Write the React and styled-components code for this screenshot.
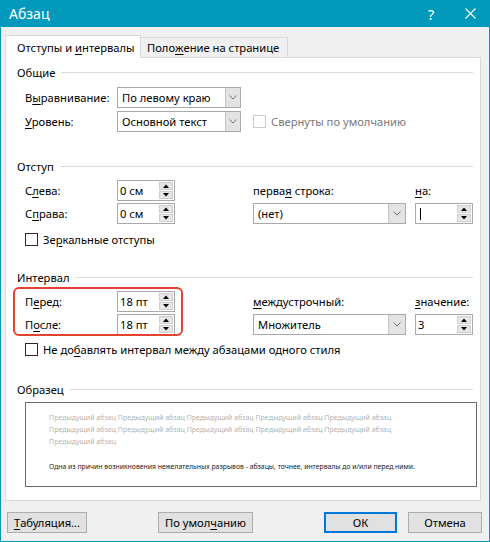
import React from "react";
import styled, { createGlobalStyle } from "styled-components";

const GlobalStyle = createGlobalStyle`
  html, body {
    margin: 0;
    padding: 0;
    background: #ffffff;
  }
  body {
    font-family: "Noto Sans", "Open Sans", sans-serif;
    font-size: 11.2px;
    color: #000;
  }
  * {
    box-sizing: border-box;
  }
`;

const Window = styled.div`
  width: 490px;
  height: 542px;
  border: 1px solid #0a98bb;
  border-top: none;
  background: #f0f0f0;
  display: flex;
  flex-direction: column;
`;

const TitleBar = styled.div`
  height: 27px;
  margin: 0 -1px;
  background: #0399bd;
  color: #fff;
  display: flex;
  align-items: center;
  padding-left: 9px;
  font-size: 14px;
`;

const TitleText = styled.div`
  flex: 1;
`;

const TitleButton = styled.div`
  width: ${(p) => p.w || 40}px;
  height: 27px;
  display: flex;
  align-items: center;
  justify-content: center;
  font-size: 15px;
`;

const TabBar = styled.div`
  display: flex;
  align-items: flex-end;
  margin-top: 8px;
  padding-left: 4px;
  position: relative;
  z-index: 1;
`;

const Tab = styled.div`
  height: ${(p) => (p.active ? 23 : 20)}px;
  width: ${(p) => p.w}px;
  background: ${(p) => (p.active ? "#fff" : "#f0f0f0")};
  border: 1px solid #d9d9d9;
  border-bottom: none;
  border-left: ${(p) => (p.active ? "1px solid #d9d9d9" : "none")};
  margin-bottom: ${(p) => (p.active ? -1 : 0)}px;
  padding-left: ${(p) => (p.active ? 11 : 6)}px;
  display: flex;
  align-items: center;
  white-space: pre;
  overflow: hidden;
`;

const Panel = styled.div`
  margin: 0 8px 0 4px;
  height: 444px;
  background: #fff;
  border: 1px solid #d9d9d9;
  padding: 0 7px 0 11px;
  display: flex;
  flex-direction: column;
`;

const SectionHeader = styled.div`
  height: 16px;
  margin-top: ${(p) => p.mt}px;
  display: flex;
  align-items: center;
  &::after {
    content: "";
    flex: 1;
    height: 1px;
    background: #dcdcdc;
    margin-left: 6px;
  }
`;

const FormGrid = styled.div`
  position: relative;
  margin-top: 5px;
  margin-left: 8px;
  display: grid;
  grid-template-columns: 92px 136px 162px 58px;
  grid-auto-rows: ${(p) => p.rowH || 23}px;
  align-items: center;
`;

const Label = styled.div`
  color: ${(p) => (p.disabled ? "#7a7a7a" : "#000")};
  white-space: pre;
`;

const U = styled.span`
  text-decoration: underline;
  text-underline-offset: 2px;
`;

const ComboBox = styled.div`
  width: ${(p) => p.w}px;
  height: 21px;
  border: 1px solid #a9a9a9;
  background: #fff;
  display: flex;
  align-items: stretch;
`;

const ComboText = styled.div`
  flex: 1;
  padding-left: 4px;
  display: flex;
  align-items: center;
  white-space: nowrap;
`;

const ComboArrow = styled.div`
  width: ${(p) => p.w || 15}px;
  background: #e3e3e3;
  border-left: 1px solid #c4c4c4;
  display: flex;
  align-items: center;
  justify-content: center;
`;

const SpinBox = styled.div`
  width: 58px;
  height: 21px;
  border: 1px solid #a9a9a9;
  background: #fff;
  display: flex;
`;

const SpinText = styled.div`
  flex: 1;
  padding-left: 2px;
  display: flex;
  align-items: center;
  white-space: nowrap;
`;

const Caret = styled.div`
  width: 1px;
  height: 12px;
  background: #000;
  margin-left: 2px;
`;

const SpinButtons = styled.div`
  width: 16px;
  display: flex;
  flex-direction: column;
  padding: 1px;
  gap: 1px;
`;

const SpinButton = styled.div`
  flex: 1;
  background: #e6e6e6;
  border: 1px solid #cfcfcf;
  display: flex;
  align-items: center;
  justify-content: center;
`;

const CheckRow = styled.div`
  margin-top: ${(p) => p.mt}px;
  margin-left: 8px;
  height: 14px;
  display: flex;
  align-items: center;
  gap: 5px;
`;

const CheckBox = styled.div`
  width: 13px;
  height: 13px;
  border: 1px solid ${(p) => (p.disabled ? "#cccccc" : "#3a2030")};
  background: #fff;
  flex-shrink: 0;
`;

const InlineCheck = styled.div`
  display: flex;
  align-items: center;
  gap: 5px;
  white-space: nowrap;
`;

const Highlight = styled.div`
  position: absolute;
  left: -12px;
  top: -3px;
  width: 170px;
  height: 49px;
  border: 2px solid #e5412f;
  border-radius: 6px;
  pointer-events: none;
`;

const Preview = styled.div`
  margin: 5px -4px 0 8px;
  height: 85px;
  border: 1px solid #6b6b6b;
  background: #fff;
  padding: 9px 0 0 23px;
  font-size: 7px;
`;

const PrevLine = styled.div`
  height: 12px;
  line-height: 12px;
  color: #b3b3b3;
  white-space: nowrap;
`;

const SampleLine = styled.div`
  margin-top: 13px;
  height: 12px;
  line-height: 12px;
  font-size: 6.85px;
  color: #1a1a1a;
  white-space: nowrap;
`;

const ButtonRow = styled.div`
  margin-top: 11px;
  padding: 0 7px 0 6px;
  display: flex;
  align-items: center;
`;

const Button = styled.div`
  width: ${(p) => p.w}px;
  height: 21px;
  margin-left: ${(p) => (p.ml === "auto" ? "auto" : `${p.ml || 0}px`)};
  background: #e1e1e1;
  border: ${(p) => (p.primary ? "2px solid #0078d7" : "1px solid #adadad")};
  display: flex;
  align-items: center;
  justify-content: center;
  white-space: pre;
`;

const Chevron = () => (
  <svg width="8" height="5" viewBox="0 0 8 5">
    <path d="M0.5 0.5 L4 4 L7.5 0.5" fill="none" stroke="#707070" strokeWidth="1" />
  </svg>
);

const Tri = ({ up }) => (
  <svg width="6" height="4" viewBox="0 0 6 4">
    <path d={up ? "M0 4 L3 0.5 L6 4 Z" : "M0 0 L3 3.5 L6 0 Z"} fill="#000" />
  </svg>
);

const Combo = ({ w, arrowW, children }) => (
  <ComboBox w={w}>
    <ComboText>{children}</ComboText>
    <ComboArrow w={arrowW}>
      <Chevron />
    </ComboArrow>
  </ComboBox>
);

const Spin = ({ value, caret }) => (
  <SpinBox>
    <SpinText>{caret ? <Caret /> : value}</SpinText>
    <SpinButtons>
      <SpinButton>
        <Tri up />
      </SpinButton>
      <SpinButton>
        <Tri />
      </SpinButton>
    </SpinButtons>
  </SpinBox>
);

const prev = "Предыдущий абзац ";

export default function App() {
  return (
    <>
      <GlobalStyle />
      <Window>
        <TitleBar>
          <TitleText>Абзац</TitleText>
          <TitleButton>?</TitleButton>
          <TitleButton w={39}>
            <svg width="11" height="11" viewBox="0 0 11 11">
              <path d="M0.5 0.5 L10.5 10.5 M10.5 0.5 L0.5 10.5" stroke="#fff" strokeWidth="1.1" />
            </svg>
          </TitleButton>
        </TitleBar>

        <TabBar>
          <Tab active w={136}>
            {"Отступы и "}
            <U>и</U>
            {"нтервалы"}
          </Tab>
          <Tab w={147}>
            {"Поло"}
            <U>ж</U>
            {"ение на странице"}
          </Tab>
        </TabBar>

        <Panel>
          <SectionHeader mt={6}>Общие</SectionHeader>
          <FormGrid rowH={24}>
            <Label>
              В<U>ы</U>равнивание:
            </Label>
            <Combo w={124}>По левому краю</Combo>
            <div />
            <div />
            <Label>
              <U>У</U>ровень:
            </Label>
            <Combo w={124}>Основной текст</Combo>
            <InlineCheck style={{ gridColumn: "3 / 5" }}>
              <CheckBox disabled />
              <Label disabled>Свернуты по умолчанию</Label>
            </InlineCheck>
          </FormGrid>

          <SectionHeader mt={25}>Отступ</SectionHeader>
          <FormGrid>
            <Label>
              С<U>л</U>ева:
            </Label>
            <Spin value="0 см" />
            <Label>
              {"перва"}
              <U>я</U>
              {" строка:"}
            </Label>
            <Label>
              <U>н</U>а:
            </Label>
            <Label>
              С<U>п</U>рава:
            </Label>
            <Spin value="0 см" />
            <Combo w={153} arrowW={17}>
              (нет)
            </Combo>
            <Spin caret />
          </FormGrid>
          <CheckRow mt={7}>
            <CheckBox />
            <Label>
              {"Зе"}
              <U>р</U>
              {"кальные отступы"}
            </Label>
          </CheckRow>

          <SectionHeader mt={23}>Интервал</SectionHeader>
          <FormGrid>
            <Highlight />
            <Label>
              П<U>е</U>ред:
            </Label>
            <Spin value="18 пт" />
            <Label>
              <U>м</U>еждустрочный:
            </Label>
            <Label>
              <U>з</U>начение:
            </Label>
            <Label>
              П<U>о</U>сле:
            </Label>
            <Spin value="18 пт" />
            <Combo w={153} arrowW={17}>
              Множитель
            </Combo>
            <Spin value="3" />
          </FormGrid>
          <CheckRow mt={6}>
            <CheckBox />
            <Label>
              {"Не до"}
              <U>б</U>
              {"авлять интервал между абзацами одного стиля"}
            </Label>
          </CheckRow>

          <SectionHeader mt={25}>Образец</SectionHeader>
          <Preview>
            <PrevLine>{prev.repeat(5)}</PrevLine>
            <PrevLine>{prev.repeat(5)}</PrevLine>
            <PrevLine>{prev}</PrevLine>
            <SampleLine>
              Одна из причин возникновения нежелательных разрывов - абзацы, точнее, интервалы до и/или перед ними.
            </SampleLine>
          </Preview>
        </Panel>

        <ButtonRow>
          <Button w={80}>
            <U>Т</U>
            {"абуляция..."}
          </Button>
          <Button w={95} ml={71}>
            {"По умол"}
            <U>ч</U>
            {"анию"}
          </Button>
          <Button w={73} ml="auto" primary>
            ОК
          </Button>
          <Button w={74} ml={11}>
            Отмена
          </Button>
        </ButtonRow>
      </Window>
    </>
  );
}
